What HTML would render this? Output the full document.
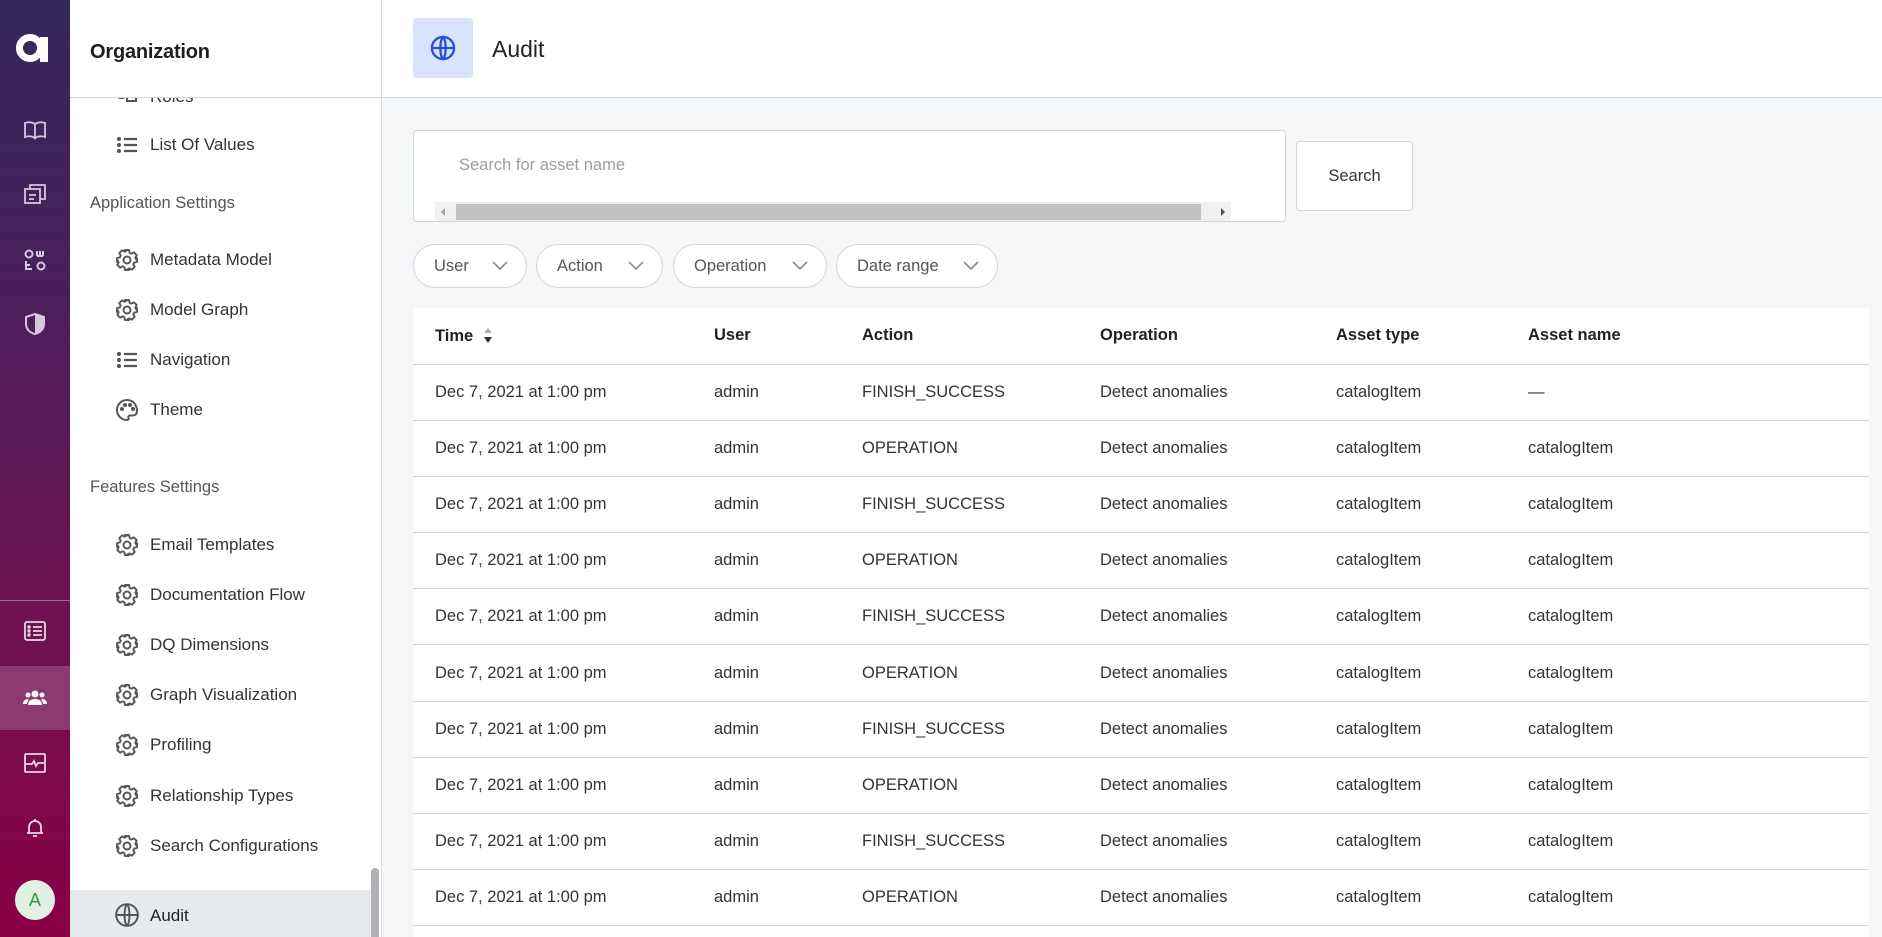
<!DOCTYPE html>
<html><head><meta charset="utf-8"><style>
*{box-sizing:border-box;margin:0;padding:0}
html,body{width:1882px;height:937px;overflow:hidden}
body{font-family:"Liberation Sans",Arial,sans-serif;background:#f5f6f8;position:relative;color:#2b2b2b}
.rail{position:absolute;left:0;top:0;width:70px;height:937px;background:linear-gradient(#34295b 0%,#4e1d5a 35%,#6a1452 62%,#8a0046 100%)}
.ri{position:absolute;left:23px;width:24px;height:24px}
.side{position:absolute;left:70px;top:0;width:312px;height:937px;background:#fff;border-right:1px solid #d6dde3;overflow:hidden}
.sh{position:absolute;left:0;top:0;width:311px;height:98px;background:#fff;border-bottom:1px solid #cfd6dc;z-index:2}
.sh span{position:absolute;left:20px;top:41px;font-size:20px;color:#1e1e1e;font-weight:bold;letter-spacing:-0.2px}
.it{position:absolute;left:0;width:300px;height:30px;font-size:17px;color:#333}
.it svg{position:absolute;left:45px;top:3px}
.it span{position:absolute;left:80px;top:5px}
.sec{position:absolute;left:20px;font-size:16.5px;color:#555}
.main{position:absolute;left:383px;top:0;width:1499px;height:937px;overflow:hidden}
.hdr{position:absolute;left:0;top:0;width:1499px;height:98px;background:#fff;border-bottom:1px solid #cfd6dc}
.pill{position:absolute;top:244px;height:44px;border:1px solid #cfd6dc;border-radius:22px;background:#fff;font-size:16.5px;color:#555;padding:12px 0 0 20px}
.pill svg{position:absolute;right:18px;top:16px}
table{position:absolute;left:30px;top:308px;width:1456px;background:#fff;border-collapse:collapse;table-layout:fixed}
td,th{height:56.2px;font-size:16.5px;text-align:left;font-weight:normal;border-bottom:1px solid #cfd6dc;color:#333;white-space:nowrap}
th{color:#222;font-weight:bold;height:56px}
</style></head><body>
<div class="rail">
<div style="position:absolute;left:16px;top:33px;width:36px;height:30px">
<svg width="36" height="30" viewBox="0 0 36 30"><circle cx="14" cy="15" r="10.5" fill="none" stroke="#fff" stroke-width="7"/><rect x="24" y="4" width="8" height="25" fill="#fff"/></svg></div>
<svg class="ri" style="top:118px" viewBox="0 0 24 24" fill="none" stroke="#d6c6de" stroke-width="1.8"><path d="M2 5c3-1 7-1 10 1v14c-3-2-7-2-10-1z M22 5c-3-1-7-1-10 1v14c3-2 7-2 10-1z"/></svg>
<svg class="ri" style="top:182px" viewBox="0 0 24 24" fill="none" stroke="#d6c6de" stroke-width="1.8"><rect x="2" y="7" width="15" height="14"/><path d="M7 7V3h15v14h-5M6 13h7M6 17h5"/></svg>
<svg class="ri" style="top:248px" viewBox="0 0 24 24" fill="none" stroke="#d6c6de" stroke-width="2"><circle cx="6" cy="6" r="3.5"/><circle cx="18" cy="18" r="3.5"/><path d="M3 13v8h6M3 17h4M14 3v5M17 3v5M20 3v5M14 8h6"/></svg>
<svg class="ri" style="top:312px" viewBox="0 0 24 24"><path d="M12 2l9 3v7c0 5-4 9-9 10C7 21 3 17 3 12V5z" fill="none" stroke="#d6c6de" stroke-width="2"/><path d="M12 2l9 3v7c0 5-4 9-9 10z" fill="#d6c6de"/></svg>
<div style="position:absolute;left:0;top:600px;width:70px;height:1px;background:#9a6a90"></div>
<svg class="ri" style="top:619px" viewBox="0 0 24 24" fill="none" stroke="#e6d6e6" stroke-width="1.8"><rect x="2" y="3" width="20" height="18" rx="2"/><path d="M10 8h9M10 12h9M10 16h9"/><circle cx="6" cy="8" r=".8"/><circle cx="6" cy="12" r=".8"/><circle cx="6" cy="16" r=".8"/></svg>
<div style="position:absolute;left:0;top:666px;width:70px;height:64px;background:#8c3a72"></div>
<svg class="ri" style="top:686px" viewBox="0 0 24 24" fill="#fff"><circle cx="12" cy="8" r="3.5"/><circle cx="5" cy="9" r="2.5"/><circle cx="19" cy="9" r="2.5"/><path d="M5 19c0-4 3-6 7-6s7 2 7 6zM0 18c0-3 2-5 5-5l1 1c-1 1-2 2-2 4zM24 18c0-3-2-5-5-5l-1 1c1 1 2 2 2 4z"/></svg>
<svg class="ri" style="top:751px" viewBox="0 0 24 24" fill="none" stroke="#e6d6e6" stroke-width="1.8"><rect x="2" y="3" width="20" height="18" rx="1"/><path d="M3 13h6l2-3 2 5 2-3h6"/></svg>
<svg class="ri" style="top:816px" viewBox="0 0 24 24" fill="none" stroke="#e6d6e6" stroke-width="1.8"><path d="M6 17V11a6 6 0 0112 0v6zM4 17h16M10 20h4M12 3v2"/></svg>
<div style="position:absolute;left:15px;top:880px;width:40px;height:40px;border-radius:50%;background:#e1f2e4;color:#2e9a46;font-size:18px;text-align:center;line-height:40px">A</div>
</div>

<div class="side">
<div class="sh"><span>Organization</span></div>
<div class="it" style="top:82px"><svg width="24" height="24" viewBox="0 0 24 24" fill="#555"><rect x="3" y="9" width="7" height="5" rx="2"/><rect x="12" y="8" width="9" height="8" fill="none" stroke="#555" stroke-width="2"/></svg><span>Roles</span></div>
<svg width="0" height="0" style="position:absolute"><defs>
<g id="lst"><circle cx="4" cy="6" r="2" fill="#555"/><circle cx="4" cy="12" r="2" fill="#555"/><circle cx="4" cy="18" r="2" fill="#555"/><path d="M9 6h13M9 12h13M9 18h13" stroke="#555" stroke-width="2.2"/></g>
<g id="gear" fill="none" stroke="#555" stroke-width="1.9" stroke-linejoin="round"><path d="M10 2h4l.6 2.8 1.8.9 2.5-1.4 2.8 2.8-1.4 2.5.9 1.8L22 10v4l-2.8.6-.9 1.8 1.4 2.5-2.8 2.8-2.5-1.4-1.8.9L14 22h-4l-.6-2.8-1.8-.9-2.5 1.4-2.8-2.8 1.4-2.5-.9-1.8L2 14v-4l2.8-.6.9-1.8-1.4-2.5 2.8-2.8 2.5 1.4 1.8-.9z"/><circle cx="12" cy="12" r="3.5"/></g>
</defs></svg>
<div class="it" style="top:130px"><svg width="24" height="24"><use href="#lst"/></svg><span>List Of Values</span></div>
<div class="sec" style="top:194px">Application Settings</div>
<div class="it" style="top:245px"><svg width="24" height="24"><use href="#gear"/></svg><span>Metadata Model</span></div>
<div class="it" style="top:295px"><svg width="24" height="24"><use href="#gear"/></svg><span>Model Graph</span></div>
<div class="it" style="top:345px"><svg width="24" height="24"><use href="#lst"/></svg><span>Navigation</span></div>
<div class="it" style="top:395px"><svg width="24" height="24" viewBox="0 0 24 24" fill="none" stroke="#555" stroke-width="2"><path d="M12 2a10 10 0 100 20c1.5 0 2-1 1.5-2-.6-1.2 0-2.5 1.5-2.5H18a4 4 0 004-4C22 6 17.5 2 12 2z"/><circle cx="7" cy="11" r="1" fill="#555"/><circle cx="10" cy="7" r="1" fill="#555"/><circle cx="15" cy="7" r="1" fill="#555"/><circle cx="18" cy="11" r="1" fill="#555"/></svg><span>Theme</span></div>
<div class="sec" style="top:478px">Features Settings</div>
<div class="it" style="top:530px"><svg width="24" height="24"><use href="#gear"/></svg><span>Email Templates</span></div>
<div class="it" style="top:580px"><svg width="24" height="24"><use href="#gear"/></svg><span>Documentation Flow</span></div>
<div class="it" style="top:630px"><svg width="24" height="24"><use href="#gear"/></svg><span>DQ Dimensions</span></div>
<div class="it" style="top:680px"><svg width="24" height="24"><use href="#gear"/></svg><span>Graph Visualization</span></div>
<div class="it" style="top:730px"><svg width="24" height="24"><use href="#gear"/></svg><span>Profiling</span></div>
<div class="it" style="top:781px"><svg width="24" height="24"><use href="#gear"/></svg><span>Relationship Types</span></div>
<div class="it" style="top:831px"><svg width="24" height="24"><use href="#gear"/></svg><span>Search Configurations</span></div>
<div style="position:absolute;left:0;top:890px;width:301px;height:47px;background:#e6eaed"></div>
<div class="it" style="top:901px;color:#222"><svg width="26" height="26" viewBox="0 0 24 24" fill="none" stroke="#555" stroke-width="1.8" style="left:44px;top:1px"><circle cx="12" cy="12" r="10"/><path d="M2 12h20M12 2c3 3 3 17 0 20M12 2c-3 3-3 17 0 20"/></svg><span>Audit</span></div>
<div style="position:absolute;left:301px;top:868px;width:8px;height:80px;border-radius:4px;background:#b3b1b6"></div>
</div>

<div class="main">
<div class="hdr">
<div style="position:absolute;left:30px;top:18px;width:60px;height:60px;background:#dae3fd;border-radius:4px">
<svg width="28" height="28" viewBox="0 0 24 24" fill="none" stroke="#2450e0" stroke-width="2" style="position:absolute;left:16px;top:16px"><circle cx="12" cy="12" r="9.5"/><path d="M2.5 12h19M12 2.5c3 3 3 16 0 19M12 2.5c-3 3-3 16 0 19"/></svg></div>
<div style="position:absolute;left:109px;top:36px;font-size:23px;color:#222">Audit</div>
</div>
<div style="position:absolute;left:30px;top:130px;width:873px;height:92px;background:#fff;border:1px solid #cfd6dc;border-radius:4px">
<div style="position:absolute;left:45px;top:25px;font-size:16.5px;color:#9a9ea4">Search for asset name</div>
<div style="position:absolute;left:21px;top:71px;width:796px;height:19px;background:#f1f1f1">
<div style="position:absolute;left:21px;top:2px;width:745px;height:16px;background:#c1c1c1"></div>
<div style="position:absolute;left:6px;top:6px;border:4px solid transparent;border-right:4px solid #a3a3a3;border-left:0"></div>
<div style="position:absolute;right:6px;top:6px;border:4px solid transparent;border-left:4px solid #505050;border-right:0"></div>
</div></div>
<div style="position:absolute;left:913px;top:141px;width:117px;height:70px;background:#fff;border:1px solid #cfd6dc;border-radius:4px;font-size:16.5px;color:#333;text-align:center;line-height:68px">Search</div>
<div class="pill" style="left:30px;width:114px">User<svg width="16" height="10" viewBox="0 0 16 10" fill="none" stroke="#888" stroke-width="1.6"><path d="M1 1l7 7 7-7"/></svg></div>
<div class="pill" style="left:153px;width:127px">Action<svg width="16" height="10" viewBox="0 0 16 10" fill="none" stroke="#888" stroke-width="1.6"><path d="M1 1l7 7 7-7"/></svg></div>
<div class="pill" style="left:290px;width:154px">Operation<svg width="16" height="10" viewBox="0 0 16 10" fill="none" stroke="#888" stroke-width="1.6"><path d="M1 1l7 7 7-7"/></svg></div>
<div class="pill" style="left:453px;width:162px">Date range<svg width="16" height="10" viewBox="0 0 16 10" fill="none" stroke="#888" stroke-width="1.6"><path d="M1 1l7 7 7-7"/></svg></div>
<table>
<colgroup><col style="width:301px"><col style="width:148px"><col style="width:238px"><col style="width:236px"><col style="width:192px"><col></colgroup>
<tr><th style="padding-left:22px">Time <svg width="12" height="20" viewBox="0 0 12 20" style="vertical-align:-5px;margin-left:4px"><path d="M2 7l4-5 4 5z" fill="#aaa"/><path d="M2 11h8l-4 6z" fill="#333"/></svg></th><th>User</th><th>Action</th><th>Operation</th><th>Asset type</th><th>Asset name</th></tr>
<tr><td style="padding-left:22px">Dec 7, 2021 at 1:00 pm</td><td>admin</td><td>FINISH_SUCCESS</td><td>Detect anomalies</td><td>catalogItem</td><td>—</td></tr>
<tr><td style="padding-left:22px">Dec 7, 2021 at 1:00 pm</td><td>admin</td><td>OPERATION</td><td>Detect anomalies</td><td>catalogItem</td><td>catalogItem</td></tr>
<tr><td style="padding-left:22px">Dec 7, 2021 at 1:00 pm</td><td>admin</td><td>FINISH_SUCCESS</td><td>Detect anomalies</td><td>catalogItem</td><td>catalogItem</td></tr>
<tr><td style="padding-left:22px">Dec 7, 2021 at 1:00 pm</td><td>admin</td><td>OPERATION</td><td>Detect anomalies</td><td>catalogItem</td><td>catalogItem</td></tr>
<tr><td style="padding-left:22px">Dec 7, 2021 at 1:00 pm</td><td>admin</td><td>FINISH_SUCCESS</td><td>Detect anomalies</td><td>catalogItem</td><td>catalogItem</td></tr>
<tr><td style="padding-left:22px">Dec 7, 2021 at 1:00 pm</td><td>admin</td><td>OPERATION</td><td>Detect anomalies</td><td>catalogItem</td><td>catalogItem</td></tr>
<tr><td style="padding-left:22px">Dec 7, 2021 at 1:00 pm</td><td>admin</td><td>FINISH_SUCCESS</td><td>Detect anomalies</td><td>catalogItem</td><td>catalogItem</td></tr>
<tr><td style="padding-left:22px">Dec 7, 2021 at 1:00 pm</td><td>admin</td><td>OPERATION</td><td>Detect anomalies</td><td>catalogItem</td><td>catalogItem</td></tr>
<tr><td style="padding-left:22px">Dec 7, 2021 at 1:00 pm</td><td>admin</td><td>FINISH_SUCCESS</td><td>Detect anomalies</td><td>catalogItem</td><td>catalogItem</td></tr>
<tr><td style="padding-left:22px">Dec 7, 2021 at 1:00 pm</td><td>admin</td><td>OPERATION</td><td>Detect anomalies</td><td>catalogItem</td><td>catalogItem</td></tr>
<tr><td style="padding-left:22px">Dec 7, 2021 at 1:00 pm</td><td>admin</td><td>FINISH_SUCCESS</td><td>Detect anomalies</td><td>catalogItem</td><td>catalogItem</td></tr>
</table>
</div>
</body></html>
